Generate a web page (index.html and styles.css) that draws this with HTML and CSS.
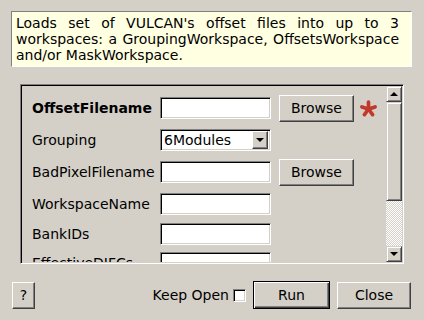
FILE: index.html
```html
<!DOCTYPE html>
<html lang="en">
<head>
    <meta charset="UTF-8">
    <title>LoadDiffCal</title>
    <link rel="stylesheet" href="styles.css">
</head>
<body>
    <div class="dialog">
        <div class="description">
            Loads set of VULCAN's offset files into up to 3 workspaces: a GroupingWorkspace, OffsetsWorkspace and/or MaskWorkspace.
        </div>

        <!-- Property list with scrollbar -->
        <div class="panel">
            <div class="rows">
                <div class="row tall">
                    <span class="label required">OffsetFilename</span>
                    <span class="field"></span>
                    <button class="btn browse">Browse</button>
                    <svg class="star" width="17" height="17" viewBox="0 0 16 16">
                        <g stroke="#c0392b" stroke-width="3.4" stroke-linecap="round">
                            <line x1="8" y1="8.5" x2="8" y2="2"/>
                            <line x1="8" y1="8.5" x2="14.2" y2="6.5"/>
                            <line x1="8" y1="8.5" x2="11.8" y2="13.8"/>
                            <line x1="8" y1="8.5" x2="4.2" y2="13.8"/>
                            <line x1="8" y1="8.5" x2="1.8" y2="6.5"/>
                        </g>
                    </svg>
                </div>
                <div class="row">
                    <span class="label">Grouping</span>
                    <span class="field combo">
                        <span class="combo-text">6Modules</span>
                        <span class="combo-btn"><span class="arrow-down"></span></span>
                    </span>
                </div>
                <div class="row tall">
                    <span class="label">BadPixelFilename</span>
                    <span class="field"></span>
                    <button class="btn browse">Browse</button>
                </div>
                <div class="row">
                    <span class="label">WorkspaceName</span>
                    <span class="field"></span>
                </div>
                <div class="row short">
                    <span class="label">BankIDs</span>
                    <span class="field"></span>
                </div>
                <div class="row short">
                    <span class="label">EffectiveDIFCs</span>
                    <span class="field"></span>
                </div>
            </div>
            <div class="scrollbar">
                <span class="sb-btn"><span class="arrow-up"></span></span>
                <span class="sb-thumb"></span>
                <span class="sb-track"></span>
                <span class="sb-btn"><span class="arrow-down"></span></span>
            </div>
        </div>

        <div class="footer">
            <button class="btn help">?</button>
            <span class="spacer"></span>
            <span class="keep-open">Keep Open</span>
            <span class="checkbox"></span>
            <button class="btn run">Run</button>
            <button class="btn close">Close</button>
        </div>
    </div>
</body>
</html>
```

FILE: styles.css
```css
/* Page and dialog */
body {
    margin: 0;
    width: 424px;
    height: 320px;
    overflow: hidden;
    background-color: #d4d0c8;
    font-family: "DejaVu Sans", sans-serif;
    font-size: 14px;
    color: #000;
}

.dialog {
    display: flex;
    flex-direction: column;
    padding: 11px 12px 0 11px;
}

.description {
    height: 56px;
    box-sizing: border-box;
    padding: 3px 12px 0 4px;
    line-height: 16px;
    text-align: justify;
    background-color: #ffffe1;
    border: 1px solid;
    border-color: #808080 #ffffff #ffffff #808080;
}

/* Sunken panel holding the properties */
.panel {
    display: flex;
    height: 180px;
    box-sizing: border-box;
    margin: 17px 8px 0 9px;
    border: 1px solid;
    border-color: #808080 #ffffff #ffffff #808080;
    box-shadow: inset 1px 1px #000000, inset -1px -1px #d4d0c8;
    padding: 1px;
    overflow: hidden;
}

.rows {
    flex: 1;
    padding: 5px 0 0 10px;
    overflow: hidden;
}

.row {
    display: flex;
    align-items: center;
    height: 30px;
}

.row.tall {
    height: 34px;
}

.row.short {
    height: 29px;
}

.label {
    width: 128px;
    flex-shrink: 0;
    white-space: nowrap;
}

.label.required {
    font-weight: bold;
}

.field {
    display: flex;
    align-items: center;
    width: 111px;
    height: 22px;
    box-sizing: border-box;
    flex-shrink: 0;
    background-color: #fff;
    border: 1px solid;
    border-color: #808080 #ffffff #ffffff #808080;
    box-shadow: inset 1px 1px #000000, inset -1px -1px #d4d0c8;
}

.combo {
    justify-content: space-between;
    padding: 2px;
}

.combo-text {
    padding-left: 1px;
}

.combo-btn {
    display: flex;
    align-items: center;
    justify-content: center;
    width: 16px;
    height: 18px;
    box-sizing: border-box;
    background-color: #d4d0c8;
    border: 1px solid;
    border-color: #ffffff #404040 #404040 #ffffff;
    box-shadow: inset -1px -1px #808080;
}

.arrow-down,
.arrow-up {
    width: 0;
    height: 0;
    border-left: 4px solid transparent;
    border-right: 4px solid transparent;
}

.arrow-down {
    border-top: 4px solid #000;
}

.arrow-up {
    border-bottom: 4px solid #000;
}

/* Raised buttons */
.btn {
    box-sizing: border-box;
    margin: 0;
    padding: 0;
    font-family: "DejaVu Sans", sans-serif;
    font-size: 14px;
    color: #000;
    background-color: #d4d0c8;
    border: 1px solid;
    border-color: #ffffff #404040 #404040 #ffffff;
    box-shadow: inset -1px -1px #808080;
}

.browse {
    width: 75px;
    height: 27px;
    margin-left: 8px;
}

.star {
    margin-left: 6px;
}

/* Scrollbar */
.scrollbar {
    display: flex;
    flex-direction: column;
    width: 16px;
}

.sb-btn {
    display: flex;
    align-items: center;
    justify-content: center;
    height: 16px;
    box-sizing: border-box;
    border: 1px solid;
    border-color: #d4d0c8 #404040 #404040 #d4d0c8;
    box-shadow: inset 1px 1px #ffffff, inset -1px -1px #808080;
}

.sb-thumb {
    height: 99px;
    box-sizing: border-box;
    border: 1px solid;
    border-color: #d4d0c8 #404040 #404040 #d4d0c8;
    box-shadow: inset 1px 1px #ffffff, inset -1px -1px #808080;
}

.sb-track {
    flex: 1;
    background-image: repeating-conic-gradient(#ffffff 0 25%, #d4d0c8 0 50%);
    background-size: 2px 2px;
}

/* Footer buttons */
.footer {
    display: flex;
    align-items: center;
    margin: 17px 1px 0 1px;
}

.spacer {
    flex: 1;
}

.help {
    width: 23px;
    height: 27px;
}

.keep-open {
    white-space: nowrap;
}

.checkbox {
    width: 13px;
    height: 13px;
    box-sizing: border-box;
    margin-left: 4px;
    background-color: #fff;
    border: 1px solid;
    border-color: #808080 #ffffff #ffffff #808080;
    box-shadow: inset 1px 1px #000000, inset -1px -1px #d4d0c8;
}

.run {
    width: 77px;
    height: 28px;
    margin-left: 7px;
    border: 1px solid #000;
    box-shadow: inset 1px 1px #ffffff, inset -1px -1px #404040, inset -2px -2px #808080;
}

.close {
    width: 74px;
    height: 27px;
    margin-left: 7px;
}
```
